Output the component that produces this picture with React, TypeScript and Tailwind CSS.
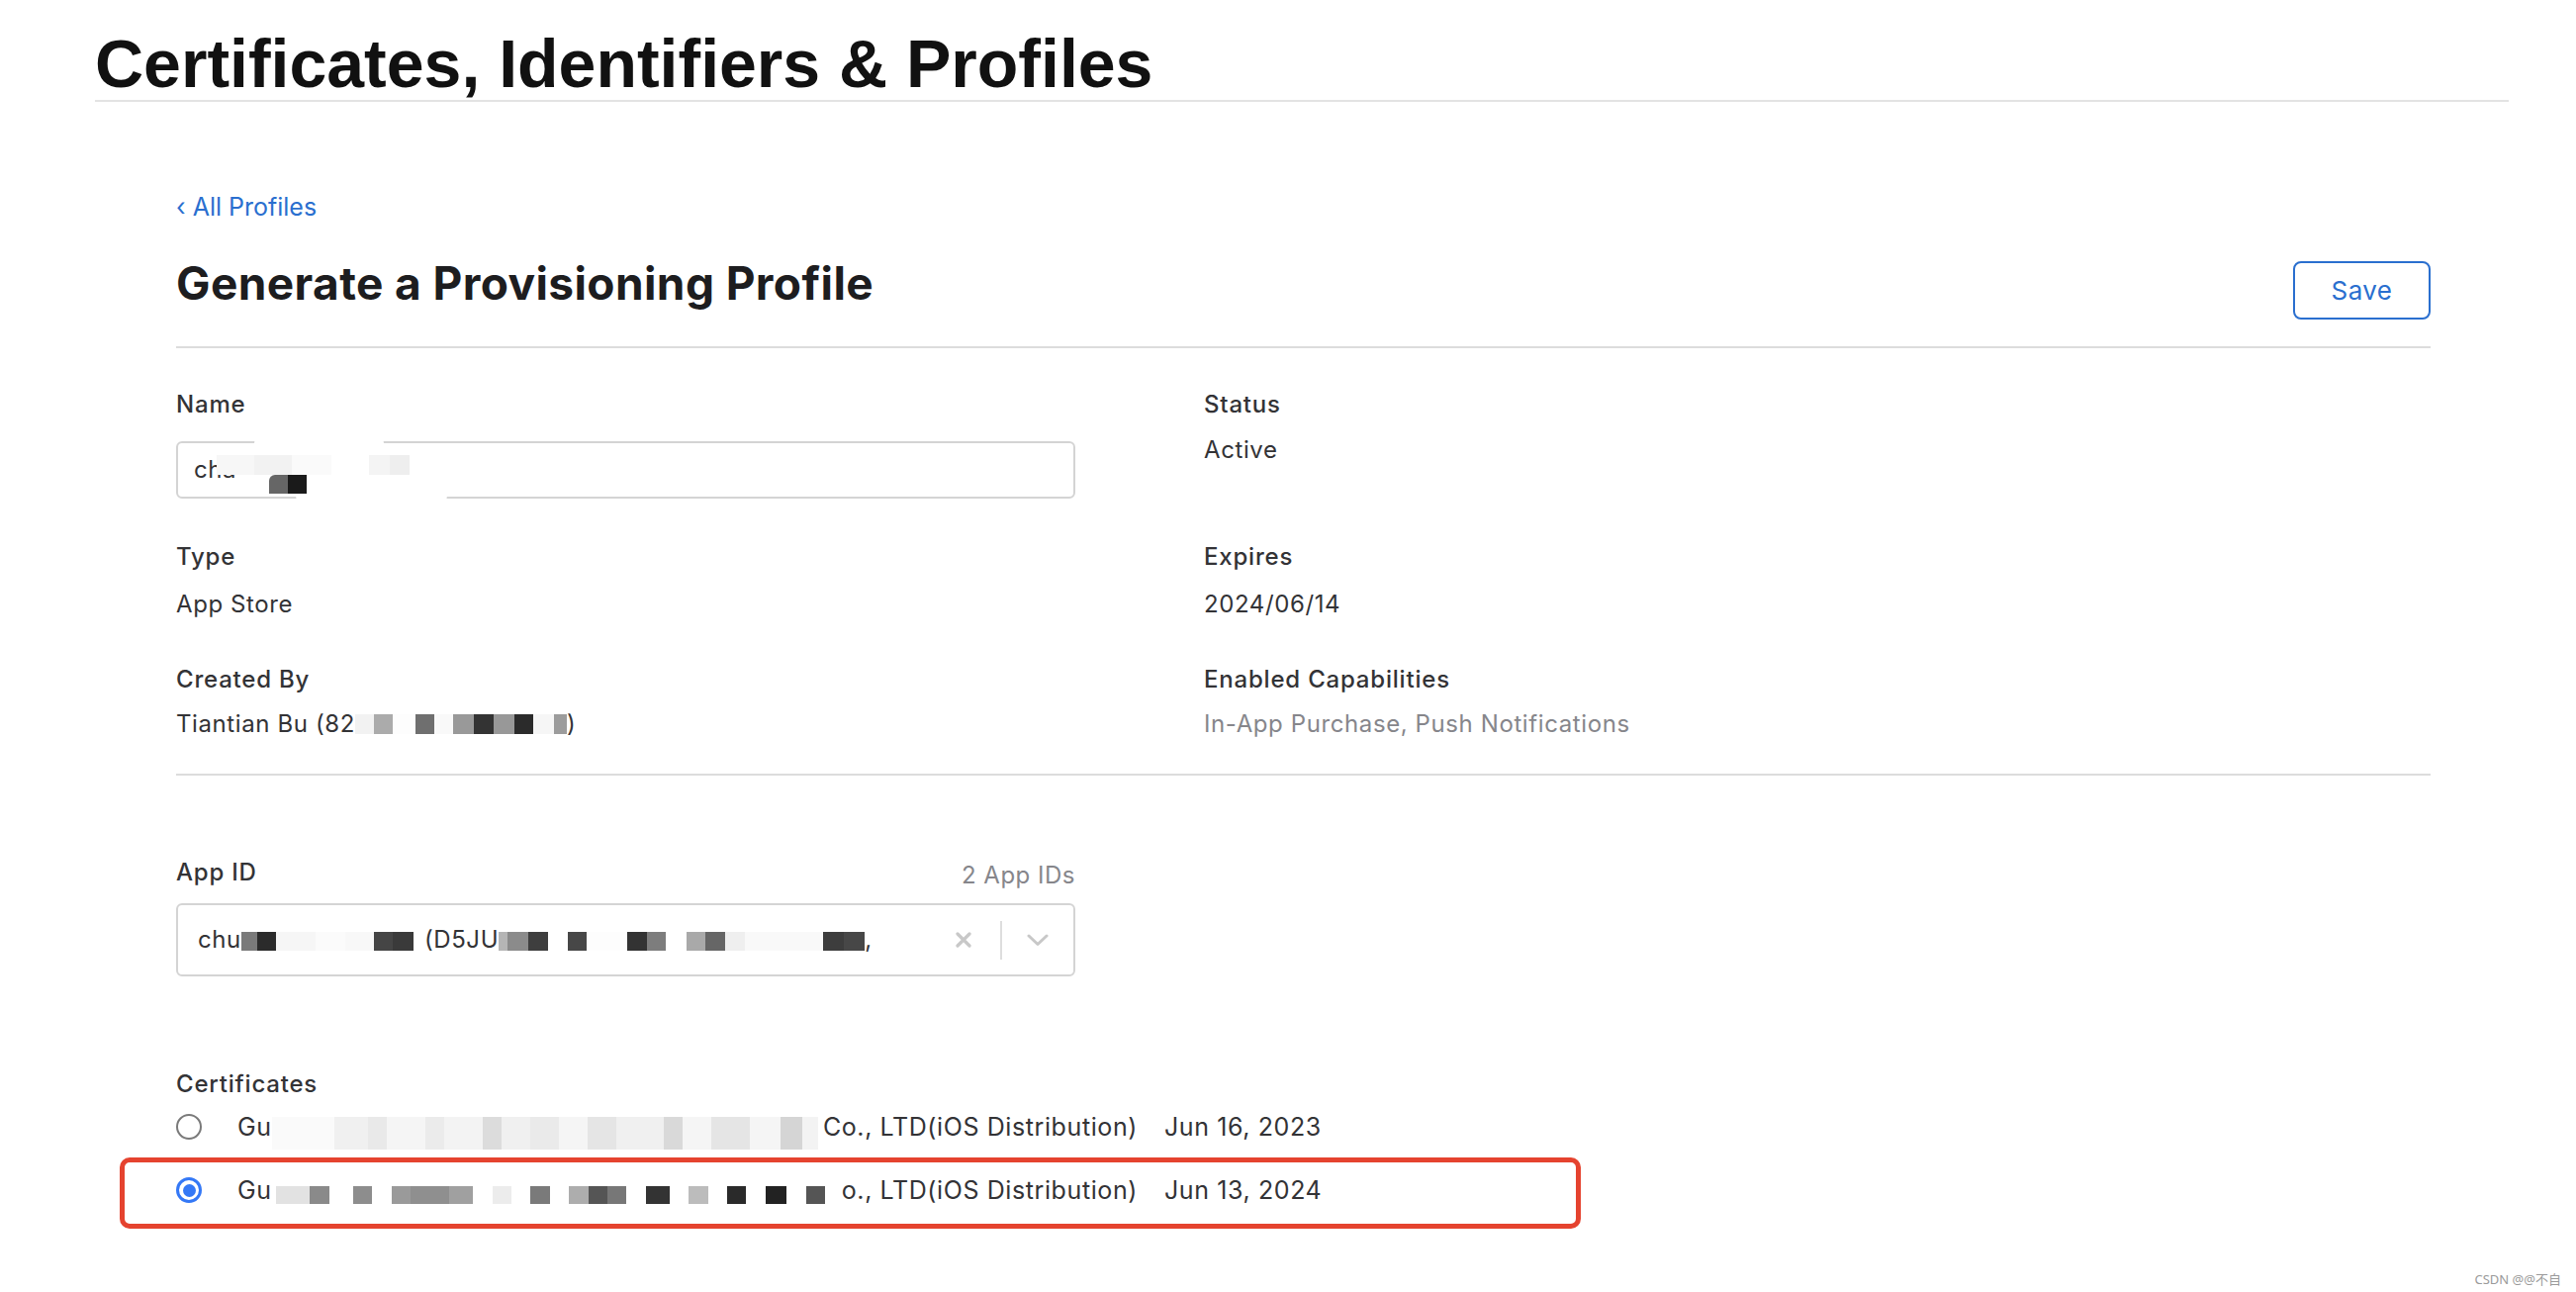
import React from "react";

type Cell = [number, string];

function Mosaic({ cells, h, className = "" }: { cells: Cell[]; h: number; className?: string }) {
  return (
    <span className={`flex shrink-0 ${className}`}>
      {cells.map(([w, c], i) => (
        <span key={i} className="block shrink-0" style={{ width: w, height: h, background: c }} />
      ))}
    </span>
  );
}

const createdCells: Cell[] = [
  [19, "#f2f2f2"], [19, "#ababab"], [23, "#fdfdfd"], [19, "#6f6f6f"], [19, "#f9f9f9"], [21, "#999999"],
  [20, "#333333"], [21, "#989898"], [19, "#2b2b2b"], [21, "#f6f6f6"], [13, "#9c9c9c"],
];

const appCellsA: Cell[] = [
  [16, "#7a7a7a"], [19, "#2b2b2b"], [40, "#f6f6f6"], [30, "#fbfbfb"], [29, "#f8f8f8"], [19, "#454545"], [21, "#3a3a3a"],
];
const appCellsB: Cell[] = [
  [9, "#b5b5b5"], [21, "#8b8b8b"], [20, "#3e3e3e"], [20, "#ffffff"], [19, "#474747"], [41, "#fdfdfd"], [20, "#333333"],
  [19, "#7d7d7d"], [21, "#ffffff"], [19, "#a9a9a9"], [20, "#666666"], [20, "#efefef"], [79, "#f9f9f9"], [21, "#3d3d3d"],
  [21, "#474747"],
];

const certRow1: Cell[] = [
  [63, "#fafafa"], [34, "#f0f0f0"], [19, "#e9e9e9"], [39, "#f5f5f5"], [19, "#ebebeb"], [39, "#f3f3f3"], [19, "#dcdcdc"],
  [29, "#f0f0f0"], [29, "#eaeaea"], [29, "#f5f5f5"], [29, "#e5e5e5"], [48, "#f0f0f0"], [19, "#d9d9d9"], [29, "#f5f5f5"],
  [39, "#e5e5e5"], [31, "#f5f5f5"], [22, "#d5d5d5"], [16, "#f3f3f3"],
];

const certRow2: Cell[] = [
  [34, "#e2e2e2"], [20, "#8a8a8a"], [24, "#ffffff"], [19, "#8d8d8d"], [20, "#ffffff"], [19, "#9a9a9a"], [39, "#8f8f8f"],
  [24, "#a0a0a0"], [20, "#ffffff"], [19, "#ececec"], [19, "#ffffff"], [20, "#7a7a7a"], [19, "#ffffff"], [20, "#adadad"],
  [19, "#555555"], [19, "#777777"], [20, "#ffffff"], [24, "#333333"], [19, "#ffffff"], [20, "#bcbcbc"], [19, "#ffffff"],
  [19, "#2a2a2a"], [20, "#ffffff"], [21, "#222222"], [20, "#ffffff"], [19, "#555555"],
];

function Label({ children }: { children: React.ReactNode }) {
  return <div className="text-[24px] leading-none font-medium tracking-[0.8px] text-[#333336]">{children}</div>;
}

function Value({ children, className = "" }: { children: React.ReactNode; className?: string }) {
  return <div className={`text-[24px] leading-none tracking-[0.6px] ${className}`}>{children}</div>;
}

export default function App() {
  return (
    <div className="relative w-[2604px] h-[1306px] bg-white overflow-hidden font-['Inter','Noto_Sans',sans-serif] text-[#333336]">
      <header className="ml-[96px] w-[2440px] pt-[30px] pb-[3px] border-b-2 border-[#e3e3e3]">
        <h1 className="font-['Liberation_Sans',Arial,sans-serif] font-bold text-[68px] leading-none text-[#111111]">
          Certificates, Identifiers &amp; Profiles
        </h1>
      </header>

      <main className="ml-[178px] w-[2279px]">
        <a className="block mt-[94px] text-[25px] leading-none text-[#2a6fcf]">‹ All Profiles</a>

        <div className="mt-[41px] flex justify-between items-start pb-[27px] border-b-2 border-[#dcdcdc]">
          <h2 className="text-[46px] leading-none font-bold text-[#1d1d1f] tracking-[0.4px]">
            Generate a Provisioning Profile
          </h2>
          <button className="mt-[1px] w-[139px] h-[59px] border-2 border-[#2a6fcf] rounded-[8px] text-[26px] leading-none tracking-[0.4px] text-[#2a6fcf] flex items-center justify-center">
            Save
          </button>
        </div>

        <div className="grid grid-cols-[1039px_1fr] pt-[45px] pb-[38px] border-b-2 border-[#dcdcdc]">
          <div>
            <Label>Name</Label>
            <div className="relative mt-[25px] w-[909px] h-[58px] border-2 border-[#d4d4d4] rounded-[6px] flex items-center pl-[16px] text-[24px] tracking-[0.6px] text-[#333336]">
              <span>cha</span>
              <span className="absolute left-[77px] top-[-5px] w-[131px] h-[10px] bg-white rounded-[5px]" />
              <span className="absolute left-[119px] top-[52px] w-[153px] h-[14px] bg-white rounded-b-[14px]" />
              <span className="absolute left-[39px] top-[12px] flex">
                <span className="block w-[38px] h-[20px] bg-[#f7f7f7]" />
                <span className="block w-[38px] h-[20px] bg-[#f2f2f2]" />
                <span className="block w-[40px] h-[20px] bg-[#fafafa]" />
                <span className="block w-[38px] h-[20px] bg-[#ffffff]" />
                <span className="block w-[21px] h-[20px] bg-[#f4f4f4]" />
                <span className="block w-[20px] h-[20px] bg-[#eeeeee]" />
              </span>
              <span className="absolute left-[92px] top-[32px] flex">
                <span className="block w-[19px] h-[19px] bg-[#666666] rounded-tl-[6px]" />
                <span className="block w-[19px] h-[19px] bg-[#1a1a1a]" />
                <span className="block w-[40px] h-[19px] bg-white" />
              </span>
            </div>
          </div>
          <div>
            <Label>Status</Label>
            <Value className="mt-[22px] text-[#333336]">Active</Value>
          </div>

          <div className="mt-[47px]">
            <Label>Type</Label>
            <Value className="mt-[24px] text-[#333336]">App Store</Value>
          </div>
          <div className="mt-[47px]">
            <Label>Expires</Label>
            <Value className="mt-[24px] text-[#333336]">2024/06/14</Value>
          </div>

          <div className="mt-[52px]">
            <Label>Created By</Label>
            <Value className="mt-[21px] flex items-center text-[#333336]">
              <span>Tiantian Bu (82</span>
              <Mosaic cells={createdCells} h={20} />
              <span>)</span>
            </Value>
          </div>
          <div className="mt-[52px]">
            <Label>Enabled Capabilities</Label>
            <Value className="mt-[21px] text-[#86868b]">In-App Purchase, Push Notifications</Value>
          </div>
        </div>

        <div className="mt-[86px] w-[909px] h-[24px] flex justify-between items-start">
          <Label>App ID</Label>
          <div className="translate-y-[3px] text-[24px] leading-none tracking-[0.5px] text-[#86868b]">2 App IDs</div>
        </div>
        <div className="mt-[19px] w-[909px] h-[74px] border-2 border-[#d4d4d4] rounded-[6px] flex items-center pl-[20px] pr-[25px]">
          <div className="flex-1 min-w-0 flex items-center text-[24px] leading-[30px] tracking-[0.6px] text-[#333336]">
            <span>chu</span>
            <Mosaic cells={appCellsA} h={19} className="translate-y-[1px]" />
            <span className="ml-[11px]">(D5JU</span>
            <Mosaic cells={appCellsB} h={19} className="translate-y-[1px]" />
            <span>,</span>
          </div>
          <svg width="16" height="16" viewBox="0 0 16 16" className="shrink-0">
            <path d="M2 2 L14 14 M14 2 L2 14" stroke="#c8c8c8" strokeWidth="3.2" strokeLinecap="round" />
          </svg>
          <div className="ml-[29px] w-[2px] h-[39px] bg-[#dedede]" />
          <svg width="22" height="13" viewBox="0 0 22 13" className="ml-[25px] shrink-0">
            <path d="M2 2 L11 10.5 L20 2" fill="none" stroke="#c8c8c8" strokeWidth="3" strokeLinecap="round" strokeLinejoin="round" />
          </svg>
        </div>

        <div className="relative mt-[97px]">
          <Label>Certificates</Label>

          <div className="mt-[11px] h-[40px] flex items-center">
            <span className="block w-[26px] h-[26px] rounded-full border-2 border-[#7a7a7a] shrink-0" />
            <div className="ml-[36px] w-[910px] flex items-center text-[25px] leading-none tracking-[0.6px] text-[#333336]">
              <span>Gu</span>
              <span className="flex-1 overflow-hidden translate-y-[6px]">
                <Mosaic cells={certRow1} h={33} />
              </span>
              <span>Co., LTD(iOS Distribution)</span>
            </div>
            <span className="ml-[27px] text-[25px] leading-none tracking-[0.6px] text-[#333336]">Jun 16, 2023</span>
          </div>

          <div className="mt-[24px] h-[40px] flex items-center">
            <span className="w-[26px] h-[26px] rounded-full border-[3px] border-[#3478f6] flex items-center justify-center shrink-0">
              <span className="block w-[13px] h-[13px] rounded-full bg-[#3478f6]" />
            </span>
            <div className="ml-[36px] w-[910px] flex items-center text-[25px] leading-none tracking-[0.6px] text-[#333336]">
              <span>Gu</span>
              <span className="flex-1 overflow-hidden translate-y-[5px] pl-[4px]">
                <Mosaic cells={certRow2} h={18} />
              </span>
              <span>o., LTD(iOS Distribution)</span>
            </div>
            <span className="ml-[27px] text-[25px] leading-none tracking-[0.6px] text-[#333336]">Jun 13, 2024</span>
          </div>

          <div className="absolute left-[-57px] top-[86px] w-[1477px] h-[72px] border-[5px] border-[#e5432f] rounded-[10px] pointer-events-none" />
        </div>
      </main>

      <div className="absolute right-[15px] bottom-[6px] text-[13px] leading-none text-[#9a9a9a] font-['Noto_Sans','Noto_Sans_CJK_SC',sans-serif]">
        CSDN @@不自
      </div>
    </div>
  );
}
